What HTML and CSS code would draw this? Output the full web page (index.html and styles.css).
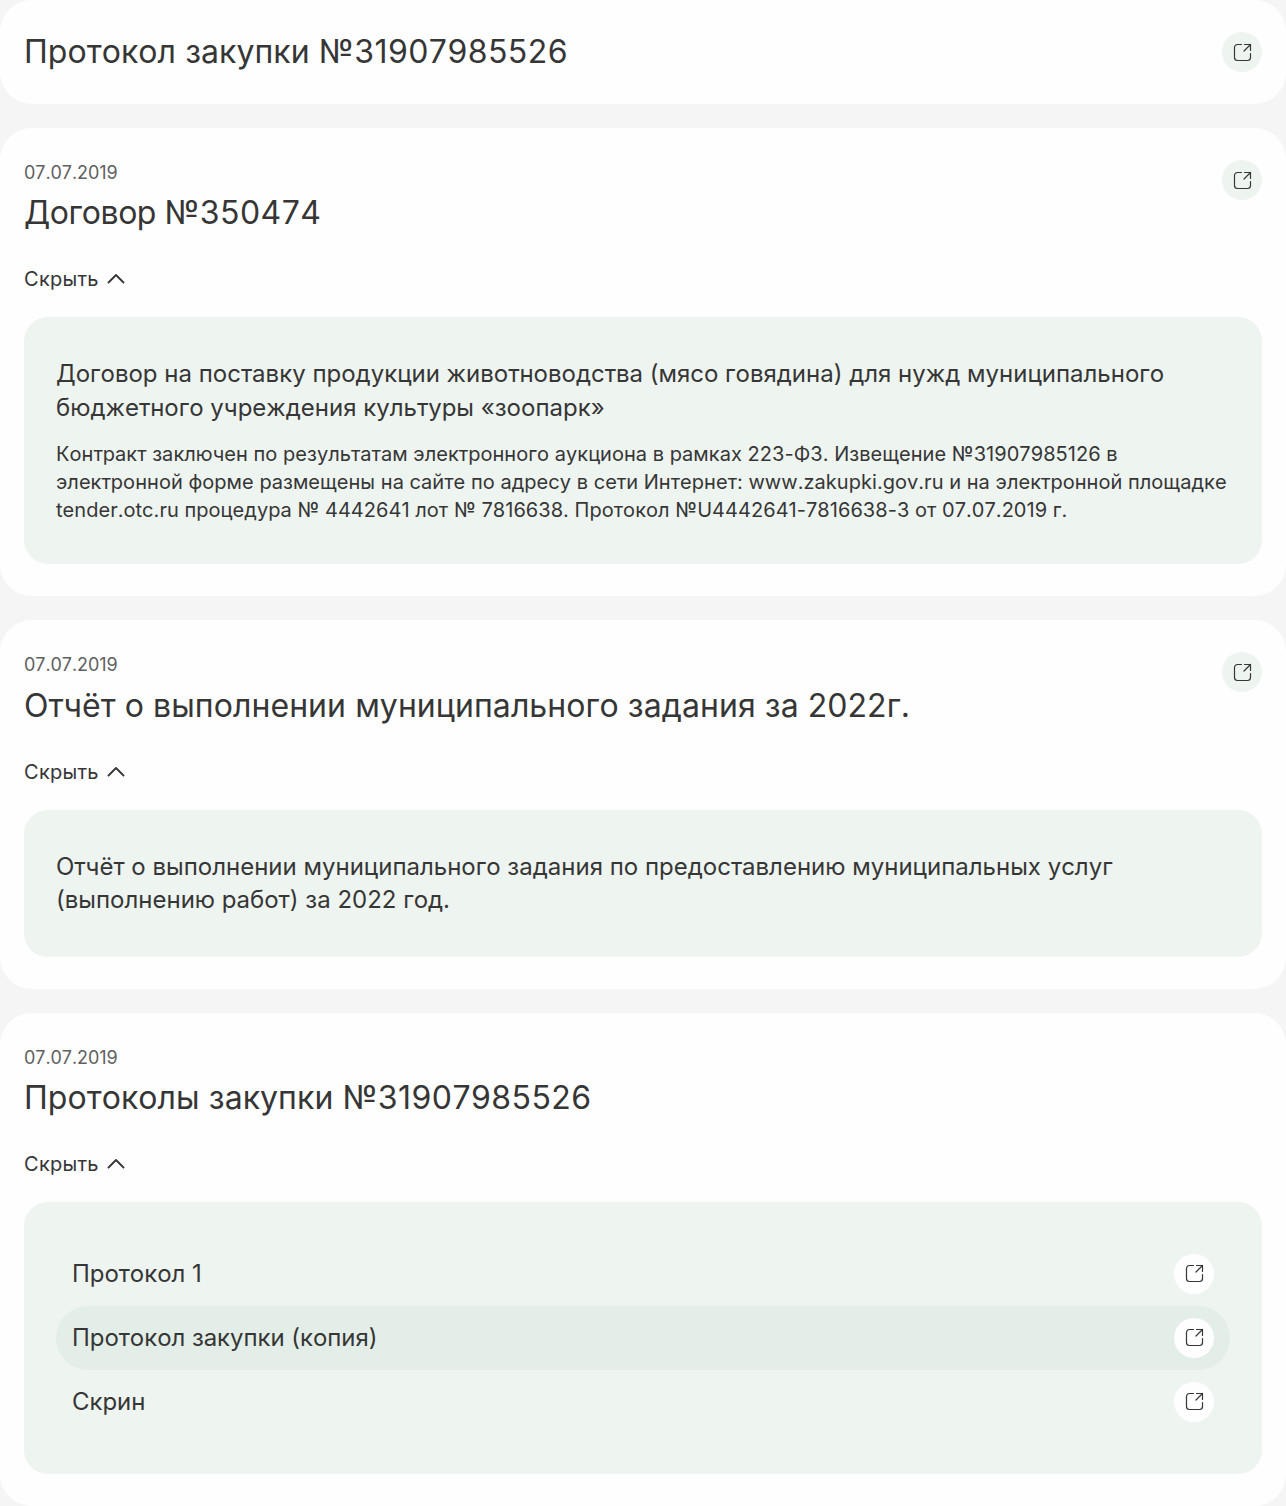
FILE: index.html
```html
<!DOCTYPE html>
<html lang="ru">
<head>
<meta charset="utf-8">
<title>Документы</title>
<link rel="stylesheet" href="styles.css">
</head>
<body>
<svg class="sprite" width="0" height="0">
  <symbol id="open" viewBox="0 0 24 24"><path d="M11.500 4.500H7.500a3 3 0 0 0-3 3v10a3 3 0 0 0 3 3h10a3 3 0 0 0 3-3v-4M14.500 4.500H20.500V10.500M20.500 4.500L14 11"/></symbol>
  <symbol id="up" viewBox="0 0 18 10"><path d="M1.500 8.500L9 1l7.500 7.500"/></symbol>
</svg>
<main class="list">
  <section class="card">
    <div class="head"><h2 class="title">Протокол закупки <span class="num">№31907985526</span></h2><a class="btn"><svg class="icon"><use href="#open"/></svg></a></div>
  </section>
  <section class="card">
    <div class="head"><div><p class="date">07.07.2019</p><h2 class="title"><span class="tight">Договор </span><span class="num">№350474</span></h2></div><a class="btn"><svg class="icon"><use href="#open"/></svg></a></div>
    <div class="toggle">Скрыть<svg class="chevron"><use href="#up"/></svg></div>
    <div class="panel">
      <p class="lead">Договор на поставку продукции животноводства (мясо говядина) для нужд муниципального бюджетного учреждения культуры «зоопарк»</p>
      <p class="text">Контракт заключен по результатам электронного аукциона в рамках 223-ФЗ. Извещение №31907985126 в электронной форме размещены на сайте по адресу в сети Интернет: www.zakupki.gov.ru и на электронной площадке tender.otc.ru процедура № 4442641 лот № 7816638. Протокол №U4442641-7816638-3 от 07.07.2019 г.</p>
    </div>
  </section>
  <section class="card">
    <div class="head"><div><p class="date">07.07.2019</p><h2 class="title">Отчёт о выполнении муниципального задания за 2022г.</h2></div><a class="btn"><svg class="icon"><use href="#open"/></svg></a></div>
    <div class="toggle">Скрыть<svg class="chevron"><use href="#up"/></svg></div>
    <div class="panel">
      <p class="lead">Отчёт о выполнении муниципального задания по предоставлению муниципальных услуг (выполнению работ) за 2022 год.</p>
    </div>
  </section>
  <section class="card">
    <div class="head"><div><p class="date">07.07.2019</p><h2 class="title">Протоколы закупки <span class="num">№31907985526</span></h2></div></div>
    <div class="toggle">Скрыть<svg class="chevron"><use href="#up"/></svg></div>
    <div class="panel">
      <div class="row">Протокол 1<a class="btn light"><svg class="icon"><use href="#open"/></svg></a></div>
      <div class="row active">Протокол закупки (копия)<a class="btn light"><svg class="icon"><use href="#open"/></svg></a></div>
      <div class="row">Скрин<a class="btn light"><svg class="icon"><use href="#open"/></svg></a></div>
    </div>
  </section>
</main>
</body>
</html>
```
FILE: styles.css
```css
* { box-sizing: border-box; }
body { margin: 0; background: #f5f5f5; color: #363636; font-family: Inter, sans-serif; font-weight: 400; font-kerning: none; }
h2, p { margin: 0; font-weight: inherit; }
.sprite { position: absolute; }
.list { display: flex; flex-direction: column; gap: 24px; }
.card { background: #fefefe; border-radius: 32px; padding: 32px 24px; }
.head { display: flex; justify-content: space-between; align-items: flex-start; }
.title { font-size: 32px; line-height: 40px; letter-spacing: 0.060px; }
.num { letter-spacing: 0.450px; }
.tight { letter-spacing: -0.500px; }
.date { font-size: 18px; line-height: 25.200px; color: #606060; margin-bottom: 8px; letter-spacing: -0.060px; }
.btn { display: flex; flex: none; align-items: center; justify-content: center; width: 40px; height: 40px; border-radius: 50%; background: #eef4f0; }
.light { background: #fefefe; padding-bottom: 2px; }
.icon { width: 24px; height: 24px; fill: none; stroke: #363636; stroke-width: 1.200; stroke-linecap: round; stroke-linejoin: round; }
.toggle { display: flex; align-items: center; gap: 8px; margin: 32px 0 24px; font-size: 20px; line-height: 28px; letter-spacing: 0.300px; }
.chevron { width: 18px; height: 10px; fill: none; stroke: #363636; stroke-width: 1.800; stroke-linecap: round; stroke-linejoin: round; }
.panel { background: #eef4f0; border-radius: 24px; padding: 40px 32px; }
.lead { font-size: 24px; line-height: 33.600px; }
.text { font-size: 20px; line-height: 28px; margin-top: 16px; letter-spacing: 0.040px; }
.row { display: flex; align-items: center; justify-content: space-between; height: 64px; padding: 0 16px; border-radius: 32px; font-size: 24px; letter-spacing: -0.060px; }
.active { background: #e4eee8; }
```
